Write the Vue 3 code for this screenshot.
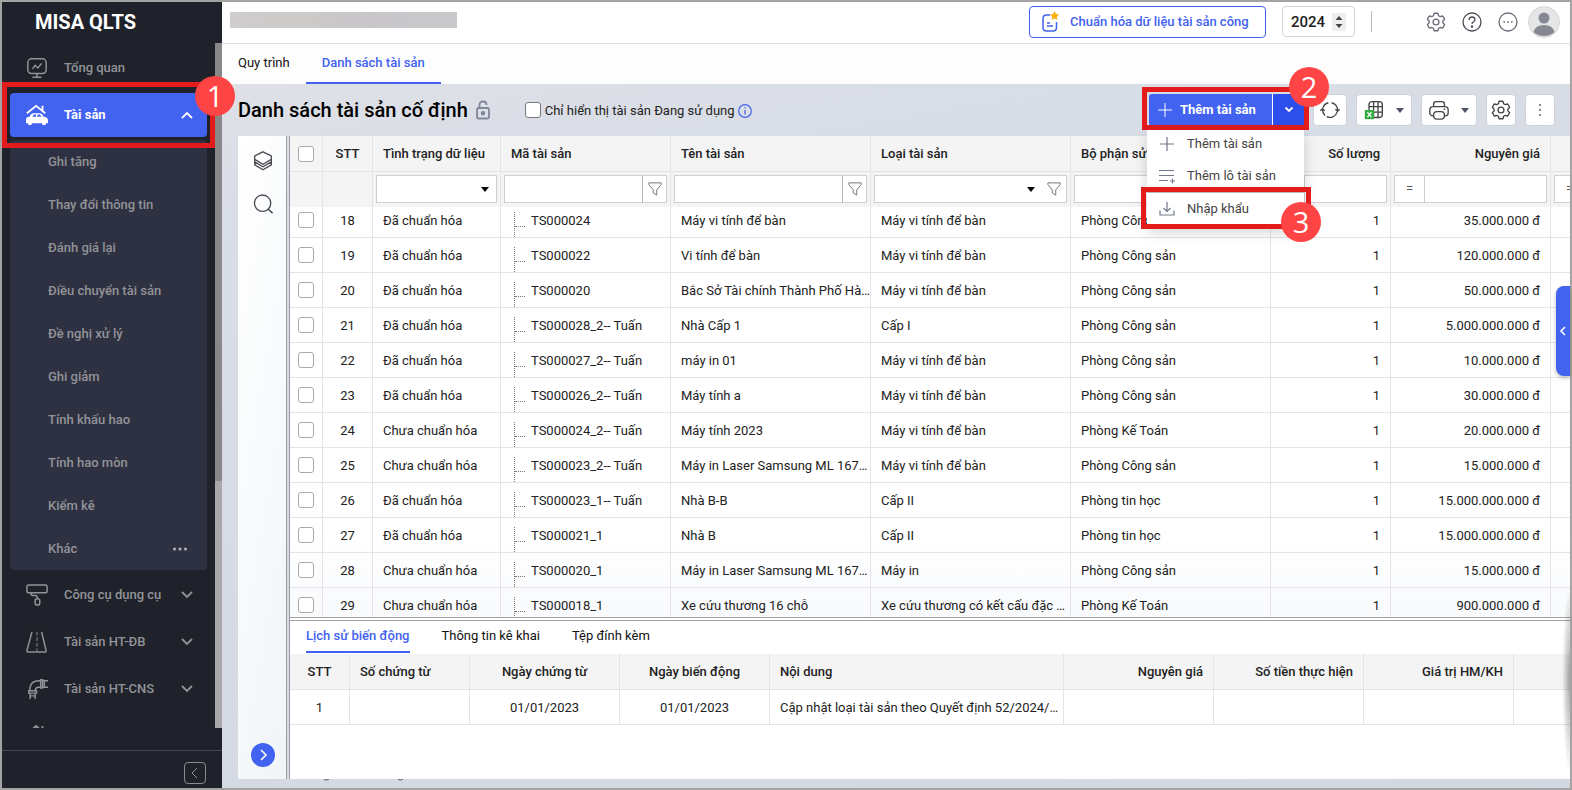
<script setup>
import { ref } from 'vue'

const subItems = [
  'Ghi tăng', 'Thay đổi thông tin', 'Đánh giá lại', 'Điều chuyển tài sản', 'Đề nghị xử lý',
  'Ghi giảm', 'Tính khấu hao', 'Tính hao mòn', 'Kiểm kê', 'Khác',
]

const columns = [
  { label: 'STT', w: 50, align: 'center', filter: 'none' },
  { label: 'Tình trạng dữ liệu', w: 128, align: 'left', filter: 'select' },
  { label: 'Mã tài sản', w: 170, align: 'left', filter: 'text' },
  { label: 'Tên tài sản', w: 200, align: 'left', filter: 'text' },
  { label: 'Loại tài sản', w: 200, align: 'left', filter: 'combo' },
  { label: 'Bộ phận sử dụng', w: 200, align: 'left', filter: 'text' },
  { label: 'Số lượng', w: 120, align: 'right', filter: 'number' },
  { label: 'Nguyên giá', w: 160, align: 'right', filter: 'number' },
]

const done = 'Đã chuẩn hóa'
const todo = 'Chưa chuẩn hóa'
const pc = 'Máy vi tính để bàn'
const cs = 'Phòng Công sản'
const rows = [
  [18, done, 'TS000024', 'Máy vi tính để bàn', pc, cs, '35.000.000 đ'],
  [19, done, 'TS000022', 'Vi tính để bàn', pc, cs, '120.000.000 đ'],
  [20, done, 'TS000020', 'Bắc Sở Tài chính Thành Phố Hà Nội', pc, cs, '50.000.000 đ'],
  [21, done, 'TS000028_2-- Tuấn', 'Nhà Cấp 1', 'Cấp I', cs, '5.000.000.000 đ'],
  [22, done, 'TS000027_2-- Tuấn', 'máy in 01', pc, cs, '10.000.000 đ'],
  [23, done, 'TS000026_2-- Tuấn', 'Máy tính a', pc, cs, '30.000.000 đ'],
  [24, todo, 'TS000024_2-- Tuấn', 'Máy tính 2023', pc, 'Phòng Kế Toán', '20.000.000 đ'],
  [25, todo, 'TS000023_2-- Tuấn', 'Máy in Laser Samsung ML 1670 A4', pc, cs, '15.000.000 đ'],
  [26, done, 'TS000023_1-- Tuấn', 'Nhà B-B', 'Cấp II', 'Phòng tin học', '15.000.000.000 đ'],
  [27, done, 'TS000021_1', 'Nhà B', 'Cấp II', 'Phòng tin học', '15.000.000.000 đ'],
  [28, todo, 'TS000020_1', 'Máy in Laser Samsung ML 1670 A4', 'Máy in', cs, '15.000.000 đ'],
  [29, todo, 'TS000018_1', 'Xe cứu thương 16 chỗ', 'Xe cứu thương có kết cấu đặc biệt', 'Phòng Kế Toán', '900.000.000 đ'],
]

const detailColumns = [
  { label: 'STT', w: 60, align: 'center' },
  { label: 'Số chứng từ', w: 120, align: 'left' },
  { label: 'Ngày chứng từ', w: 150, align: 'center' },
  { label: 'Ngày biến động', w: 150, align: 'center' },
  { label: 'Nội dung', w: 294, align: 'left' },
  { label: 'Nguyên giá', w: 150, align: 'right' },
  { label: 'Số tiền thực hiện', w: 150, align: 'right' },
  { label: 'Giá trị HM/KH', w: 150, align: 'right' },
]
const detailRow = ['1', '', '01/01/2023', '01/01/2023', 'Cập nhật loại tài sản theo Quyết định 52/2024/QĐ-UBND', '', '', '']

const year = ref('2024')
</script>

<template>
  <div class="app">
    <aside class="side">
      <div class="brand">MISA QLTS</div>
      <div class="side-body">
        <nav class="menu">
          <a class="item" href="#">
            <svg class="ico" viewBox="0 0 24 24"><rect x="2" y="2" width="20" height="16" rx="4" /><path d="M7 13l3-4 3 3 4-5M12 18v4M7 22h10" /></svg>
            <span>Tổng quan</span>
          </a>
          <div class="item-wrap">
            <a class="item active" href="#">
              <svg class="ico" viewBox="0 0 24 24">
                <path d="M1 10L11 2l10 8M18 2v5" stroke-width="2" />
                <path d="M4 14q1-4 4.500-4h6q3.500 0 4.500 4h1q4 .5 4 4v3h-2a2.300 2.300 0 0 1-4.600 0H6.600a2.300 2.300 0 0 1-4.600 0H0v-3.500Q0 14 4 14z" fill="#fff" stroke="none" />
                <path d="M7 14l1.500-2.500H11V14zM12.500 11.500h2.500l2 2.500h-4.500z" fill="#4262f0" stroke="none" />
              </svg>
              <span>Tài sản</span>
              <svg class="chev" viewBox="0 0 12 12"><path d="M1 9l5-5 5 5" /></svg>
            </a>
            <div class="frame frame-1"></div>
            <div class="badge badge-1">1</div>
          </div>
          <div class="sub">
            <a v-for="s in subItems" :key="s" class="sub-item" href="#">
              <span>{{ s }}</span>
              <svg v-if="s === 'Khác'" class="dots" viewBox="0 0 14 4"><circle cx="1.500" cy="2" r="1.500" /><circle cx="7" cy="2" r="1.500" /><circle cx="12.500" cy="2" r="1.500" /></svg>
            </a>
          </div>
          <a class="item" href="#">
            <svg class="ico" viewBox="0 0 24 24"><rect x="1" y="1" width="22" height="8.500" rx="2" /><path d="M5 9.500q0 3 3 3h2q2.500 0 2.500 3.500" /><rect x="10" y="16" width="5" height="7" rx="2" /></svg>
            <span>Công cụ dụng cụ</span>
            <svg class="chev" viewBox="0 0 12 12"><path d="M1 3l5 5 5-5" /></svg>
          </a>
          <a class="item" href="#">
            <svg class="ico" viewBox="0 0 24 24"><path d="M6.500 1L1 21.500q0 1.500 1 1.500h19q1 0 1-1.500L17 1" /><path d="M12 1v21" stroke-dasharray="4 2" stroke-width="1" /></svg>
            <span>Tài sản HT-ĐB</span>
            <svg class="chev" viewBox="0 0 12 12"><path d="M1 3l5 5 5-5" /></svg>
          </a>
          <a class="item" href="#">
            <svg class="ico" viewBox="0 0 24 24"><path d="M16 3h-2Q4 3 4 14M16 10h-2q-4 0-4 4M16 2h2v9h-2zM20 2v9M18 3h6M18 10h6M3 14h8.500v2.500H3zM4.500 16.500V23M10 16.500V23M4.500 19.500H10" /></svg>
            <span>Tài sản HT-CNS</span>
            <svg class="chev" viewBox="0 0 12 12"><path d="M1 3l5 5 5-5" /></svg>
          </a>
          <a class="item" href="#" aria-label="Nhà">
            <svg class="ico" viewBox="0 0 24 24"><path d="M3 8l8-7 8 7v12H3zM18 1v5" stroke-width="2" /></svg>
          </a>
        </nav>
        <div class="scroll"><div class="thumb"></div></div>
      </div>
      <div class="side-foot">
        <button class="collapse" aria-label="Thu gọn"><svg viewBox="0 0 12 12"><path d="M8 1L3 6l5 5" /></svg></button>
      </div>
    </aside>

    <main class="main">
      <header class="top">
        <div class="mask"></div>
        <button class="std">
          <svg viewBox="0 0 20 22"><path d="M9 4H5.500Q2 4 2 7.500v9Q2 20 5.500 20h6.500q3.500 0 3.500-3.500V11" fill="none" stroke="#4262f0" stroke-width="1.500" /><path d="M6 12h3M6 15h6" stroke="#4262f0" stroke-width="1.500" /><path d="M13.500 0l1.500 3 3.200.5-2.400 2.300.6 3.200-2.900-1.500L10.600 9l.6-3.200-2.400-2.300L12 3z" fill="#fbb016" /></svg>
          <span>Chuẩn hóa dữ liệu tài sản công</span>
        </button>
        <label class="year">
          <input v-model="year" aria-label="Năm" />
          <svg viewBox="0 0 14 18"><rect width="14" height="18" fill="#eee" /><path d="M7 3l3.500 4h-7zM7 15l3.500-4h-7z" fill="#444" /></svg>
        </label>
        <div class="divider"></div>
        <div class="top-icons">
          <button class="plain" aria-label="Cài đặt"><svg viewBox="0 0 24 24"><path class="gear" d="M9.700 1.500h4.600l.8 3 2 1.100 3-.8 2.300 4-2.200 2.200v2l2.200 2.200-2.300 4-3-.8-2 1.100-.8 3H9.700l-.8-3-2-1.100-3 .8-2.300-4L3.800 13v-2L1.600 8.800l2.300-4 3 .8 2-1.100z" /><circle cx="12" cy="12" r="3.500" /></svg></button>
          <button class="plain dark" aria-label="Trợ giúp"><svg viewBox="0 0 24 24"><circle cx="12" cy="12" r="10.800" /><path d="M8.500 9.500q0-3.500 3.500-3.500t3.500 3q0 1.500-1.700 2.700Q12 12.800 12 14.500" /><circle cx="12" cy="17.500" r=".7" fill="currentColor" /></svg></button>
          <button class="plain" aria-label="Thêm"><svg viewBox="0 0 24 24"><circle cx="12" cy="12" r="10.800" /><path d="M6.500 12h2M11 12h2M15.500 12h2" stroke-width="2" /></svg></button>
        </div>
        <button class="avatar" aria-label="Tài khoản">
          <svg viewBox="0 0 32 32"><circle cx="16" cy="16" r="15.500" fill="#e6e6e6" stroke="#d6d6d8" /><circle cx="16" cy="12" r="5.500" fill="#868993" /><path d="M5.500 26q2-7 10.500-7t10.500 7q-4 4-10.500 4t-10.500-4z" fill="#868993" /></svg>
        </button>
      </header>

      <nav class="tabs">
        <a class="tab" href="#">Quy trình</a>
        <a class="tab on" href="#">Danh sách tài sản</a>
      </nav>

      <section class="bar">
        <h1>Danh sách tài sản cố định</h1>
        <svg class="lock" viewBox="0 0 14 20"><path d="M3.500 8V5q0-3.500 3.500-3.500T10.500 5" /><rect x="1" y="8" width="12" height="10.500" rx="1.500" /><circle cx="7" cy="13.200" r="1.300" fill="#808799" /></svg>
        <label class="only"><input class="cb" type="checkbox" /><span>Chỉ hiển thị tài sản Đang sử dụng</span></label>
        <svg class="info" viewBox="0 0 14 14"><circle cx="7" cy="7" r="6.300" /><path d="M7 6v4.500M7 3.200v1.400" /></svg>
        <div class="tools">
          <div class="split">
            <button class="add"><svg viewBox="0 0 14 14"><path d="M7 0v14M0 7h14" /></svg><span>Thêm tài sản</span></button>
            <button class="more" aria-label="Mở danh sách"><svg viewBox="0 0 10 8"><path d="M1.500 1.500L5 5l3.500-3.500" /></svg></button>
            <div class="frame frame-2"></div>
            <div class="drop">
              <button><svg viewBox="0 0 16 16"><path d="M8 1v14M1 8h14" /></svg>Thêm tài sản</button>
              <button><svg viewBox="0 0 16 16"><path d="M0 2.500h15M0 7.500h15M0 12.500h9M13.500 10.500v5M11 13h5" /></svg>Thêm lô tài sản</button>
              <button class="import"><svg viewBox="0 0 16 16"><path d="M8 1v9M4.500 7L8 10.500 11.500 7M1 9.500V14h14V9.500" /></svg>Nhập khẩu</button>
            </div>
            <div class="frame frame-3"></div>
            <div class="badge badge-2">2</div>
            <div class="badge badge-3">3</div>
          </div>
          <button class="tool w34" aria-label="Làm mới"><svg class="i20" viewBox="0 0 24 24"><path d="M20.500 14.500A9 9 0 0 1 8 20M3.500 9.500A9 9 0 0 1 10 3.300M14 3.300a9 9 0 0 1 7 9.200M3 11.500A9 9 0 0 0 6 18.500" /><path d="M18.500 11l2.500 2.500 2.500-2.500M.5 13L3 10.500 5.500 13" /></svg></button>
          <button class="tool w56" aria-label="Xuất Excel"><svg class="i20" viewBox="0 0 24 24"><rect x="6" y="2" width="16" height="19" rx="3.500" /><path d="M11.500 2v19M16.800 2v19M6 8h16M6 14.500h16" /><rect x="1" y="12" width="11" height="11" fill="#2fab3f" stroke="none" /><path d="M4 14.500l5 6M9 14.500l-5 6" stroke="#fff" /></svg><i class="caret"></i></button>
          <button class="tool w56" aria-label="In"><svg class="i20" viewBox="0 0 24 24"><path d="M5.500 8V5q0-3 3-3h7q3 0 3 3v3M5.500 19H5q-4 0-4-3.500V12Q1 8 5 8h14q4 0 4 4v3.500q0 3.500-4 3.500h-.5" /><rect x="5.500" y="14" width="13" height="9" rx="4" /><path d="M17.500 11h2" /></svg><i class="caret"></i></button>
          <button class="tool w30" aria-label="Thiết lập"><svg class="i20" viewBox="0 0 24 24"><path class="gear" d="M9.700 1.500h4.600l.8 3 2 1.100 3-.8 2.300 4-2.200 2.200v2l2.200 2.200-2.300 4-3-.8-2 1.100-.8 3H9.700l-.8-3-2-1.100-3 .8-2.300-4L3.800 13v-2L1.600 8.800l2.300-4 3 .8 2-1.100z" /><circle cx="12" cy="12" r="3.500" /></svg></button>
          <button class="tool w30" aria-label="Khác"><svg class="i20" viewBox="0 0 24 24"><path d="M12 5v2M12 11v2M12 17v2" stroke-width="2" /></svg></button>
        </div>
      </section>

      <section class="work">
        <div class="rail">
          <svg class="i20" viewBox="0 0 24 24"><path d="M12 1l10 5v4l-10 6-10-6V6z" /><path d="M2 10v3l10 6 10-6v-3M2 13v3.500l10 6 10-6V13" /></svg>
          <svg class="i20" viewBox="0 0 24 24"><circle cx="11.500" cy="11" r="9.800" /><path d="M18 18l5.500 5" stroke-width="2" /></svg>
          <button class="open" aria-label="Mở rộng"><svg viewBox="0 0 12 12"><path d="M4 1l5 5-5 5" /></svg></button>
        </div>
        <div class="grids">
          <div class="master">
            <table class="head">
              <colgroup><col class="c-check" /><col v-for="c in columns" :key="c.label" :style="{ width: c.w + 'px' }" /><col /></colgroup>
              <thead>
                <tr>
                  <th class="ck"><input class="cb" type="checkbox" aria-label="Chọn tất cả" /></th>
                  <th v-for="c in columns" :key="c.label" :class="c.align">{{ c.label }}</th>
                  <th></th>
                </tr>
                <tr class="filters">
                  <td></td>
                  <td v-for="c in columns" :key="c.label">
                    <div v-if="c.filter !== 'none'" class="fbox">
                      <span v-if="c.filter === 'number'" class="eq">=</span>
                      <select v-if="c.filter === 'select' || c.filter === 'combo'" :aria-label="c.label"><option></option></select>
                      <input v-else :aria-label="c.label" />
                      <i v-if="c.filter === 'select' || c.filter === 'combo'" class="caret black"></i>
                      <span v-if="c.filter === 'text' || c.filter === 'combo'" class="fun" :class="{ line: c.filter === 'text' }">
                        <svg viewBox="0 0 16 16"><path d="M1 1h14v2L10 9v6l-4-2.500V9L1 3z" /></svg>
                      </span>
                    </div>
                  </td>
                  <td><div class="fbox cut"><span class="eq">=</span></div></td>
                </tr>
              </thead>
            </table>
            <div class="rows">
              <table>
                <colgroup><col class="c-check" /><col v-for="c in columns" :key="c.label" :style="{ width: c.w + 'px' }" /><col /></colgroup>
                <tbody>
                  <tr v-for="r in rows" :key="r[0]">
                    <td class="ck"><input class="cb" type="checkbox" :aria-label="'Chọn dòng ' + r[0]" /></td>
                    <td class="center">{{ r[0] }}</td>
                    <td>{{ r[1] }}</td>
                    <td class="tree"><i class="branch"></i>{{ r[2] }}</td>
                    <td class="long">{{ r[3] }}</td>
                    <td class="long">{{ r[4] }}</td>
                    <td>{{ r[5] }}</td>
                    <td class="right">1</td>
                    <td class="right">{{ r[6] }}</td>
                    <td></td>
                  </tr>
                </tbody>
              </table>
            </div>
          </div>
          <div class="detail">
            <nav class="dtabs">
              <a class="on" href="#">Lịch sử biến động</a>
              <a href="#">Thông tin kê khai</a>
              <a href="#">Tệp đính kèm</a>
            </nav>
            <table>
              <colgroup><col v-for="c in detailColumns" :key="c.label" :style="{ width: c.w + 'px' }" /><col /></colgroup>
              <thead><tr><th v-for="c in detailColumns" :key="c.label" :class="c.align">{{ c.label }}</th><th></th></tr></thead>
              <tbody><tr><td v-for="(v, i) in detailRow" :key="i" :class="[detailColumns[i].align, { long: i === 4 }]">{{ v }}</td><td></td></tr></tbody>
            </table>
          </div>
        </div>
        <button class="pull" aria-label="Mở bảng bên"><svg viewBox="0 0 8 10"><path d="M6 1L2 5l4 4" /></svg></button>
        <div class="edge-shadow"></div>
      </section>
      <footer class="foot">
        <svg viewBox="0 0 84 3"><path d="M1 0q2 2.500 5 0M75 0q2 2.500 5 0" /></svg>
      </footer>
    </main>
  </div>
</template>

<style>
body { margin: 0; overflow: hidden; }
</style>

<style scoped>
* { box-sizing: border-box; }
.app {
  display: grid;
  grid-template-columns: 220px minmax(0, 1fr);
  height: 100vh;
  border: 2px solid #a3a3a3;
  font: 13px/18px Roboto, "Liberation Sans", sans-serif;
  color: #222;
}
button, input, select { font: inherit; color: inherit; margin: 0; padding: 0; }
button { border: 0; background: none; }
a { color: inherit; text-decoration: none; }
svg { display: block; fill: none; stroke: currentColor; flex: none; }

.side { display: flex; flex-direction: column; min-height: 0; background: #1f222a; color: #929398; position: relative; z-index: 3; }
.brand { height: 41px; padding-left: 33px; font-size: 20px; font-weight: 700; line-height: 41px; color: #fff; }
.side-body { flex: 1; min-height: 0; display: flex; }
.menu { flex: 1; min-width: 0; display: flex; flex-direction: column; gap: 3px; padding: 3px 8px 0; clip-path: inset(0 -30px 0 0); }
.item { display: flex; align-items: center; flex: none; height: 44px; padding: 0 14px 0 16px; border-radius: 4px; font-weight: 500; }
.item .ico { width: 22px; height: 22px; margin-right: 16px; stroke-width: 1.600; }
.chev { width: 12px; height: 12px; margin-left: auto; stroke-width: 1.800; }
.item-wrap { position: relative; flex: none; }
.active { background: #4262f0; color: #fff; font-weight: 700; }
.sub { flex: none; background: #2e3141; border-radius: 4px; }
.sub-item { display: flex; align-items: center; height: 43px; padding: 0 20px 0 38px; font-weight: 500; }
.dots { width: 14px; height: 4px; margin-left: auto; fill: #b5b6ba; stroke: none; }
.scroll { width: 7px; background: #888; display: flex; align-items: flex-end; }
.thumb { width: 7px; height: 36%; background: #a8a8a8; }
.side-foot { height: 60px; display: flex; align-items: flex-end; justify-content: flex-end; padding: 0 16px 4px 0; background: linear-gradient(#1f222a 0 22px, #464952 22px 23px, #1f222a 23px); }
.collapse { width: 22px; height: 22px; border: 1px solid #8a8b90; border-radius: 4px; display: grid; place-items: center; }
.collapse svg { width: 12px; height: 12px; stroke-width: 1; }

.frame { position: absolute; border: 5px solid #e31b1b; pointer-events: none; }
.badge { position: absolute; width: 40px; height: 40px; border-radius: 50%; background: #fe4445; color: #fff; font: 29px/40px "Open Sans", sans-serif; text-align: center; }
.frame-1 { left: -8px; right: -8px; top: -11px; bottom: -11px; }
.badge-1 { right: -28px; top: -17px; }
.frame-2 { left: -7px; top: -7px; right: -5px; bottom: -4px; }
.frame-3 { left: -8px; top: 93px; width: 170px; height: 42px; }
.badge-2 { left: 140px; top: -27px; }
.badge-3 { left: 132px; top: 108px; }

.main { display: flex; flex-direction: column; min-width: 0; min-height: 0; background: linear-gradient(170deg, #e3e3e7, #d9dde6 20%, #d2d8e1); }
.top { flex: none; height: 42px; display: flex; align-items: center; padding: 0 10px 2px 8px; background: #fff; border-bottom: 1px solid #e0e0e2; }
.mask { width: 227px; height: 16px; margin: 0 auto 3px 0; background: linear-gradient(90deg, #cfcdcd, #cbcac7 38%, #c9c5ca 55%, #c8c9cc); }
.std { width: 237px; height: 32px; display: flex; align-items: center; padding-left: 11px; border: 1px solid #4262f0; border-radius: 4px; color: #4262f0; font-weight: 500; white-space: nowrap; }
.std svg { width: 20px; height: 22px; margin-right: 9px; stroke: none; }
.year { width: 73px; height: 31px; display: flex; align-items: center; margin: 0 16px; padding: 0 8px; border: 1px solid #d3d4da; border-radius: 4px; }
.year input { width: 41px; border: 0; outline: 0; background: none; font-size: 15px; font-weight: 500; }
.year svg { width: 14px; height: 18px; stroke: none; }
.divider { width: 1px; height: 21px; margin-right: 54px; background: #b9bac2; }
.top-icons { display: flex; gap: 16px; color: #6d707a; }
.plain svg { width: 20px; height: 20px; stroke-width: 1.600; }
.dark { color: #4a4c54; }
.avatar { margin-left: 10px; }
.avatar svg { width: 32px; height: 32px; stroke: none; }
.gear { stroke-linejoin: round; }

.tabs { flex: none; height: 40px; display: flex; background: #fdfdfe; color: #111; }
.tab { padding: 10px 16px 0; border-bottom: 2px solid transparent; }
.on { color: #4262f0; font-weight: 500; border-bottom-color: #4262f0; }

.bar { flex: none; height: 52px; display: flex; align-items: center; padding: 0 15px 0 16px; position: relative; z-index: 2; white-space: nowrap; }
h1 { margin: 0; font-size: 20px; font-weight: 500; line-height: 24px; color: #000; }
.lock { width: 14px; height: 20px; margin-left: 8px; stroke: #808799; stroke-width: 1.800; }
.only { display: flex; align-items: center; gap: 4px; margin-left: 35px; }
.only span { padding-top: 2px; }
.cb { appearance: none; width: 16px; height: 16px; border: 1px solid #aaa; border-radius: 3px; background: #fff; display: block; }
.only .cb { border-color: #777; }
.info { width: 14px; height: 14px; margin: 2px 0 0 3px; stroke: #4262f0; stroke-width: 1.200; }
.tools { display: flex; gap: 9px; margin-left: auto; color: #444; }
.split { position: relative; display: flex; width: 155px; height: 32px; color: #fff; }
.add { display: flex; align-items: center; width: 123px; padding-left: 9px; background: #4262f0; border-radius: 3px 0 0 3px; font-weight: 700; }
.add svg { width: 14px; height: 14px; margin-right: 8px; }
.more { flex: 1; display: grid; place-items: center; background: #2c4eea; border-left: 1px solid #fff; }
.more svg { width: 10px; height: 8px; stroke-width: 1.800; }
.drop { position: absolute; left: -2px; right: 0; top: 36px; padding-bottom: 4px; background: #fff; box-shadow: 0 4px 12px rgba(0, 0, 0, .18); color: #444; }
.drop button { display: flex; align-items: center; width: 100%; height: 32px; padding-left: 12px; }
.drop button:first-child { height: 30px; padding-bottom: 2px; }
.drop svg { width: 16px; height: 16px; margin-right: 12px; stroke: #73798a; stroke-width: 1.200; }
.drop .import { border-top: 1px solid #bbb; }
.tool { height: 32px; display: flex; align-items: center; justify-content: center; background: #fff; border: 1px solid #d0d3db; border-radius: 4px; }
.w30 { width: 30px; } .w34 { width: 34px; } .w56 { width: 56px; gap: 12px; }
.i20 { width: 20px; height: 20px; stroke-width: 1.600; flex: none; }
.caret { border: 4px solid transparent; border-top: 5px solid #4e5567; border-bottom: 0; flex: none; }
.black { border-top-color: #000; margin-right: 7px; }

.work { flex: 1; min-height: 0; display: flex; margin-left: 16px; gap: 2px; position: relative; }
.rail { width: 49px; display: flex; flex-direction: column; align-items: center; gap: 23px; padding: 15px 0 12px 2px; background: linear-gradient(100deg, #fff, #f1f5f8); border-right: 1px solid #9a9ca1; color: #4a4c52; }
.open { width: 24px; height: 24px; margin-top: auto; border-radius: 50%; background: #4262f0; color: #fff; display: grid; place-items: center; }
.open svg { width: 12px; height: 12px; stroke-width: 1.600; }
.grids { flex: 1; min-width: 0; display: flex; flex-direction: column; gap: 2px; border-left: 1px solid #9a9ca1; background: #fff; }
.master { flex: 1; min-height: 0; display: flex; flex-direction: column; border-bottom: 1px solid #9fa3a6; }
table { width: 100%; table-layout: fixed; border-collapse: separate; border-spacing: 0; }
.c-check { width: 33px; }
th, td { height: 35px; padding: 0 10px; border-right: 1px solid #e4e4e6; border-bottom: 1px solid #e4e4e6; text-align: left; font-weight: 400; white-space: nowrap; overflow: hidden; }
th:last-child, td:last-child { border-right: 0; }
th { height: 36px; background: #f4f4f4; font-weight: 500; }
tbody td { padding-top: 2px; }
.center { text-align: center; } .right { text-align: right; }
th.ck, tbody td.ck { padding: 0 8px; }
tbody td.long { text-overflow: ellipsis; padding-right: 0; }
.head { flex: none; position: relative; z-index: 1; }
.filters td { padding: 3px 3px 0; background: #f4f4f4; border-bottom: 0; vertical-align: top; }
.fbox { display: flex; align-items: center; height: 28px; background: #fff; border: 1px solid #cfcfd1; }
.fbox input, .fbox select { flex: 1; min-width: 0; height: 26px; border: 0; outline: 0; appearance: none; background: none; }
.fun { width: 24px; height: 26px; display: grid; place-items: center; flex: none; }
.line { border-left: 1px solid #b5b5b5; }
.fun svg { width: 14px; height: 14px; stroke: #666; }
.eq { width: 30px; line-height: 26px; text-align: center; border-right: 1px solid #cfcfd1; flex: none; color: #555; }
.cut { width: 100px; }
.rows { flex: 1; min-height: 0; overflow: hidden; background: linear-gradient(#fff 80%, #f8fafc); }
.rows table { margin-top: -4px; }
.rows .tree { position: relative; padding-left: 30px; }
.branch { position: absolute; left: 13px; top: 9px; bottom: 0; border-left: 1px dotted #777; }
.branch::after { content: ""; position: absolute; left: 0; top: 14px; width: 10px; border-top: 1px dotted #777; }

.detail { flex: none; height: 159px; border-top: 1px solid #9fa3a6; background: #fff; }
.dtabs { display: flex; gap: 32px; height: 33px; padding: 0 16px; color: #111; }
.dtabs a { height: 32px; padding-top: 6px; border-bottom: 2px solid transparent; }
.dtabs .on { border-bottom-color: #4262f0; }
.pull { position: absolute; right: 0; top: 150px; width: 14px; height: 90px; display: grid; place-items: center; border-radius: 8px 0 0 8px; background: #4262f0; color: #fff; box-shadow: 0 2px 4px rgba(0, 0, 0, .25); }
.pull svg { width: 8px; height: 10px; stroke-width: 1.600; }
.edge-shadow { position: absolute; right: 0; bottom: 4px; width: 8px; height: 190px; background: radial-gradient(ellipse at right, rgba(0, 0, 0, .35), transparent 70%); pointer-events: none; }
.foot { flex: none; height: 9px; }
.foot svg { width: 84px; height: 3px; margin-left: 101px; stroke: #555; }
</style>
